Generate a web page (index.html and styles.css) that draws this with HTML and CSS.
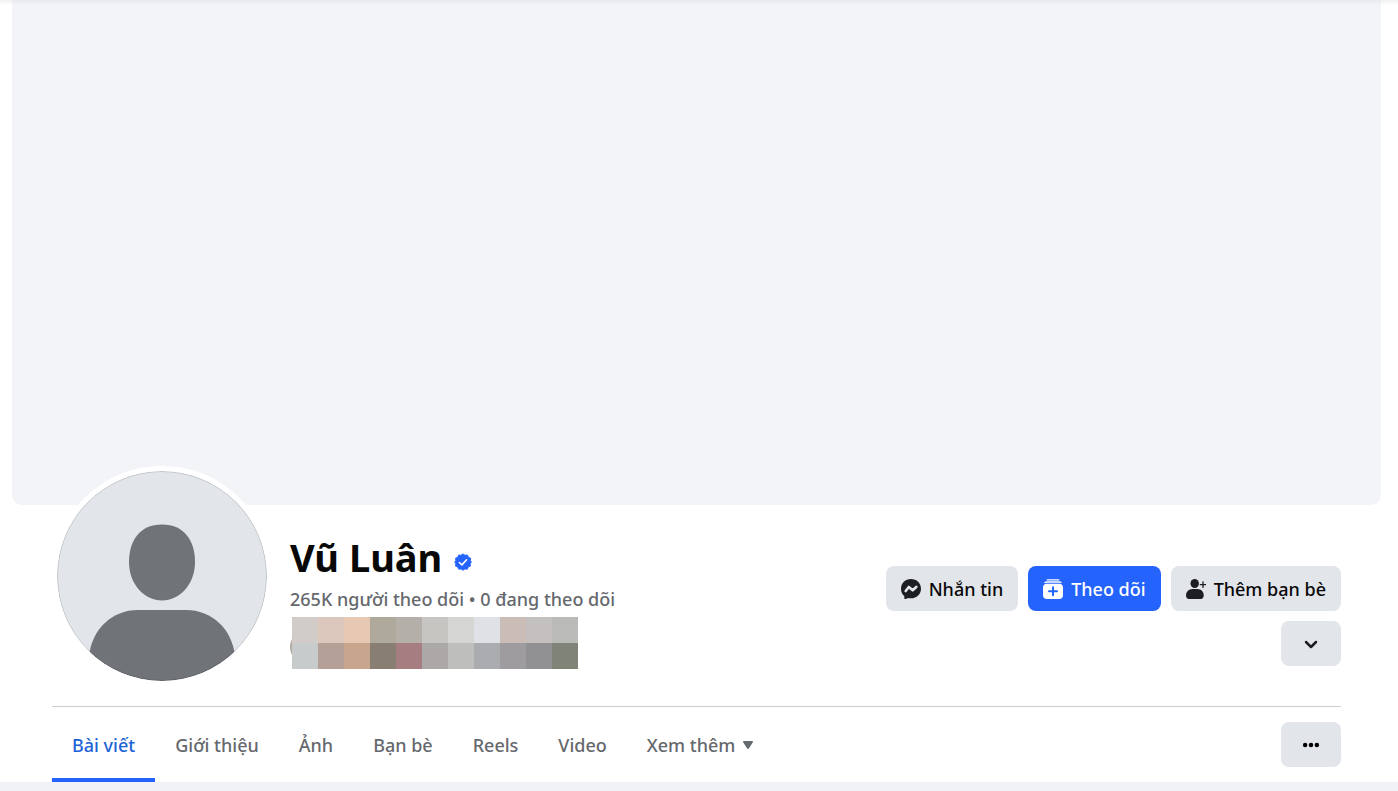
FILE: index.html
```
<!DOCTYPE html>
<html lang="vi">
<head>
  <meta charset="UTF-8" />
  <title>Vũ Luân</title>
  <meta name="viewport" content="width=device-width, initial-scale=1.0" />
  <link rel="stylesheet" href="styles.css">
</head>
<body>
  <header class="profile">
    <div class="cover"></div>

    <div class="content">
      <div class="info">
        <svg class="avatar" viewBox="0 0 210 210" role="img" aria-label="Vũ Luân">
          <defs>
            <clipPath id="circle"><circle cx="105" cy="105" r="105" /></clipPath>
          </defs>
          <g clip-path="url(#circle)">
            <rect width="210" height="210" fill="#e2e5e9" />
            <path fill="#707378" d="M105 53.500c22 0 33 16 33 37.500 0 22-15 38.500-33 38.500S72 113 72 91c0-21.500 11-37.500 33-37.500z" />
            <path fill="#707378" d="M81 139h48c26 0 46 19 49 46v25H32v-25c3-27 23-46 49-46z" />
          </g>
          <circle cx="105" cy="105" r="104.500" fill="none" stroke="#000" stroke-opacity=".14" />
        </svg>

        <div class="details">
          <h1>Vũ Luân
            <svg class="verified" viewBox="0 0 20 20" role="img" aria-label="Đã xác minh">
              <path fill="#2563fd" stroke="#2563fd" stroke-linejoin="round" d="M10 1l2.300 1.500 2.700-.3 1 2.500 2.500 1-.3 2.700L19.300 10l-1.300 1.900.3 2.600-2.500 1.100-1 2.400-2.600-.3L10 19.200l-2.200-1.500-2.600.3-1.100-2.400-2.400-1.100.3-2.600L.8 10l1.200-1.700-.3-2.600 2.500-1 1-2.500 2.600.3z" />
              <path fill="none" stroke="#fff" stroke-width="1.700" stroke-linecap="round" stroke-linejoin="round" d="M6 10.500l2.800 2.700 5.200-5.700" />
            </svg>
          </h1>
          <p class="counts"><a href="#">265K người theo dõi</a> • <a href="#">0 đang theo dõi</a></p>
          <div class="friends">
            <i class="c1"></i><i class="c2"></i><i class="c3"></i><i class="c4"></i><i class="c5"></i><i class="c6"></i><i class="c7"></i><i class="c8"></i><i class="c9"></i><i class="c10"></i><i class="c11"></i>
            <i class="c12"></i><i class="c13"></i><i class="c14"></i><i class="c15"></i><i class="c16"></i><i class="c17"></i><i class="c18"></i><i class="c19"></i><i class="c20"></i><i class="c21"></i><i class="c22"></i>
          </div>
        </div>

        <div class="actions">
          <button class="btn">
            <svg class="icon" viewBox="0 0 20 20" aria-hidden="true">
              <path fill="#1c1e21" d="M10 0c5.700 0 10 4.200 10 9.700s-4.300 9.600-10 9.600c-1 0-2-.1-2.900-.4l-2.200 1c-.9.400-1.600 0-1.600-.9v-1.900C1.200 15.400 0 12.900 0 9.700 0 4.200 4.300 0 10 0z" />
              <path fill="none" stroke="#e2e5e9" stroke-width="2.600" stroke-linecap="round" stroke-linejoin="round" d="M4.700 12l3.100-4 3.900 3.300L15.300 8" />
            </svg>
            Nhắn tin
          </button>
          <button class="btn primary">
            <svg class="icon" viewBox="0 0 20 20" aria-hidden="true">
              <path fill="none" stroke="#fff" stroke-width="1.300" stroke-linecap="round" d="M4.200 .8h11.600M2 3.600c.5-.4 1.200-.6 2-.6h12c.8 0 1.500.2 2 .6" />
              <rect y="4.700" width="20" height="15.300" rx="4" fill="#fff" />
              <path fill="none" stroke="#2563fd" stroke-width="2" stroke-linecap="round" d="M10 8.300v8M6 12.300h8" />
            </svg>
            Theo dõi
          </button>
          <button class="btn">
            <svg class="icon" viewBox="0 0 20 20" aria-hidden="true">
              <ellipse cx="8.700" cy="4.500" rx="4.200" ry="4.500" fill="#1c1e21" />
              <path fill="#1c1e21" d="M6.500 10h5c3.500 0 6.200 2.800 6.200 6.300 0 2.200-1 3.700-3 3.700H3c-2 0-3-1.500-3-3.700C0 12.800 3 10 6.500 10z" />
              <path fill="none" stroke="#1c1e21" stroke-width="1.300" stroke-linecap="round" d="M17 3v5.400M14.300 5.700h5.400" />
            </svg>
            Thêm bạn bè
          </button>
          <button class="btn small" aria-label="Gợi ý">
            <svg class="icon" viewBox="0 0 20 20" aria-hidden="true">
              <path fill="none" stroke="#1c1e21" stroke-width="2.500" stroke-linecap="round" stroke-linejoin="round" d="M5 8l5 5 5-5" />
            </svg>
          </button>
        </div>
      </div>

      <nav class="tabs">
        <a class="active" href="#">Bài viết</a>
        <a href="#">Giới thiệu</a>
        <a href="#">Ảnh</a>
        <a href="#">Bạn bè</a>
        <a href="#">Reels</a>
        <a href="#">Video</a>
        <a href="#">Xem thêm
          <svg class="caret" viewBox="0 0 10 8" aria-hidden="true"><path fill="#65686c" d="M1 0h8c1 0 1.300.8.700 1.500L6 7.300c-.6.800-1.400.8-2 0L.3 1.500C-.3.800 0 0 1 0z" /></svg>
        </a>
        <button class="btn small" aria-label="Tùy chọn">
          <svg class="icon" viewBox="0 0 20 20" aria-hidden="true">
            <circle cx="3.500" cy="10" r="2.500" /><circle cx="10" cy="10" r="2.500" /><circle cx="16.500" cy="10" r="2.500" />
          </svg>
        </button>
      </nav>
    </div>
  </header>
</body>
</html>
```
FILE: styles.css
```
:root {
  --bg: #f1f2f6;
  --cover: #f2f4f8;
  --text: #080809;
  --muted: #65686c;
  --btn: #e2e5e9;
  --accent: #2563fd;
}

* {
  box-sizing: border-box;
}

body {
  margin: 0;
  background-color: var(--bg);
  color: var(--text);
  font-family: 'Segoe UI', 'Noto Sans', sans-serif;
  font-size: 18px;
  font-weight: 500;
}

a {
  color: inherit;
  text-decoration: none;
}

.profile {
  position: relative;
  z-index: 0;
  padding: 0 17px 0 12px;
  background: linear-gradient(#f0f0f1, #fff 5px);
  box-shadow: 0 1px 3px rgba(0, 0, 0, 0.25);
}

.cover {
  height: 505px;
  background: linear-gradient(#e9eaef, var(--cover) 5px);
  border-radius: 0 0 10px 10px;
}

.content {
  padding: 0 40px;
}

.info {
  display: flex;
  align-items: flex-start;
  gap: 18px;
  padding-bottom: 20px;
  border-bottom: 1px solid #ccced2;
}

.avatar {
  flex: none;
  width: 220px;
  height: 220px;
  margin-top: -39px;
  padding: 5px;
  background: #fff;
  border-radius: 50%;
}

.details {
  flex: 1 0 auto;
  padding-top: 29px;
}

h1 {
  display: flex;
  align-items: center;
  gap: 12px;
  margin: 0;
  font-size: 38px;
  font-weight: 700;
  line-height: 46px;
}

.verified {
  width: 18px;
  height: 18px;
  margin-top: 10px;
}

.counts {
  margin: 6px 0 0;
  color: var(--muted);
  line-height: 26px;
}

.friends {
  position: relative;
  display: grid;
  grid-template-columns: repeat(11, 26px);
  grid-auto-rows: 26px;
  margin: 5px 0 0 2px;
}

/* first friend's picture, mostly hidden by the tiles */
.friends::before {
  content: '';
  position: absolute;
  z-index: -1;
  top: 13px;
  left: -2px;
  width: 34px;
  height: 34px;
  border-radius: 50%;
  background: #b3aaa2;
}

.c1 { background: #d1ccc8; }
.c2 { background: #dcc7bc; }
.c3 { background: #e6c8b3; }
.c4 { background: #aea99a; }
.c5 { background: #b4afa9; }
.c6 { background: #c6c5c1; }
.c7 { background: #d5d5d3; }
.c8 { background: #e0e1e6; }
.c9 { background: #cabdb8; }
.c10 { background: #c4c0c0; }
.c11 { background: #babab8; }
.c12 { background: #c7cbcc; }
.c13 { background: #b4a097; }
.c14 { background: #c8a58d; }
.c15 { background: #887e71; }
.c16 { background: #a67e82; }
.c17 { background: #ada8a8; }
.c18 { background: #bebebc; }
.c19 { background: #abacb0; }
.c20 { background: #9e9c9f; }
.c21 { background: #919193; }
.c22 { background: #7f8378; }

.actions {
  flex: 0 1 480px;
  display: flex;
  flex-wrap: wrap;
  justify-content: flex-end;
  gap: 10px;
  padding-top: 61px;
}

.btn {
  display: flex;
  align-items: center;
  justify-content: center;
  gap: 8px;
  height: 45px;
  padding: 0 15px;
  border: none;
  border-radius: 8px;
  background-color: var(--btn);
  color: var(--text);
  font: inherit;
  white-space: nowrap;
  cursor: pointer;
}

.btn.primary {
  background-color: var(--accent);
  color: #fff;
}

.btn.small {
  width: 60px;
}

.icon {
  flex: none;
  width: 20px;
  height: 20px;
}

.tabs {
  display: flex;
  align-items: center;
  height: 75px;
}

.tabs a {
  display: flex;
  align-items: center;
  gap: 8px;
  height: 100%;
  padding: 0 20px;
  border-top: 4px solid transparent;
  border-bottom: 4px solid transparent;
  color: var(--muted);
  white-space: nowrap;
}

.tabs a.active {
  color: #1c63d5;
  border-bottom-color: var(--accent);
}

.tabs .btn {
  margin-left: auto;
}

.tabs .icon {
  width: 18px;
}

.caret {
  width: 10px;
  height: 8px;
}
```
